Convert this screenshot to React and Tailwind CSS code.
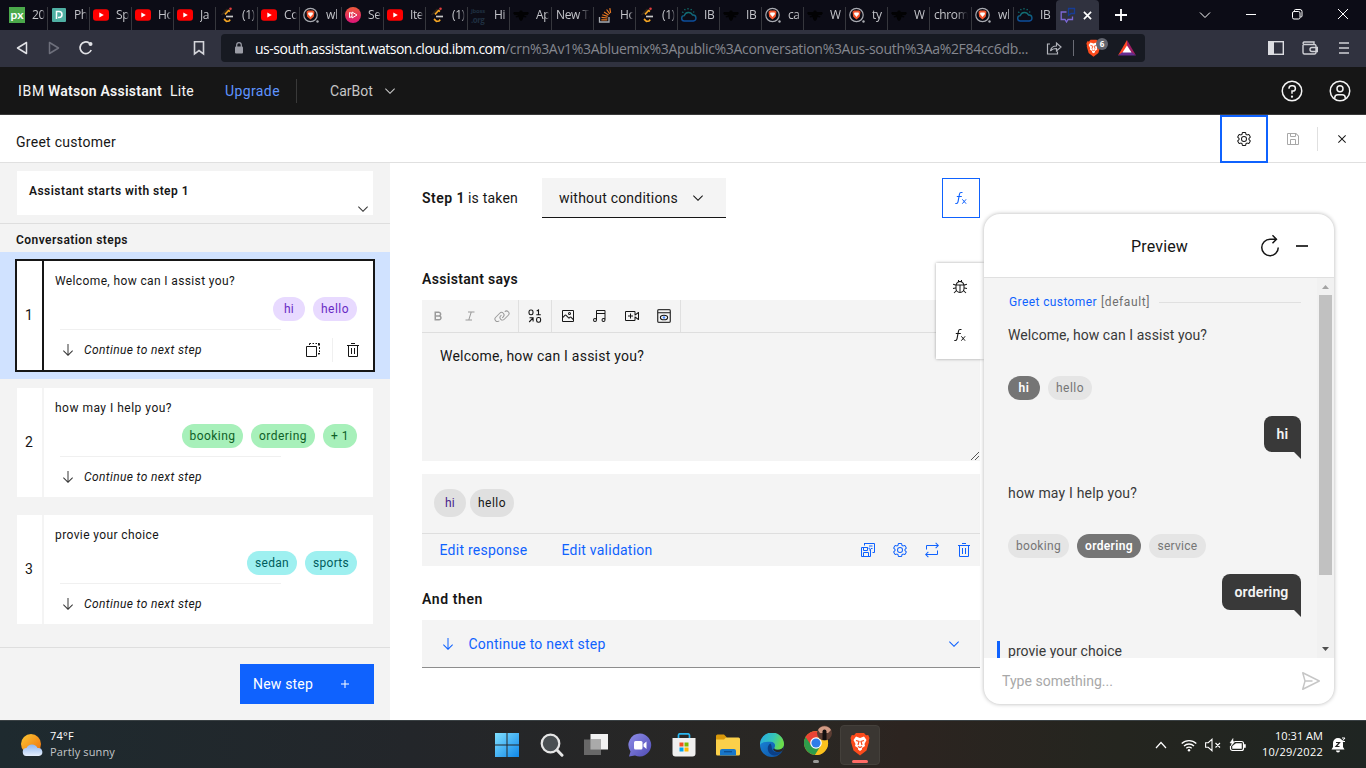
import { useLayoutEffect, useRef } from "react";

/* Text tracked so that it fills the given width in pixels. */
function T({ w, className = "", children }) {
  const ref = useRef(null);
  useLayoutEffect(() => {
    const el = ref.current;
    el.style.letterSpacing = "0px";
    const natural = el.getBoundingClientRect().width;
    const count = el.textContent.length;
    if (w && count) el.style.letterSpacing = `${(w - natural) / count}px`;
  }, [w]);
  return (
    <span ref={ref} className={`inline-block shrink-0 whitespace-nowrap ${className}`}>
      {children}
    </span>
  );
}

const paths = {
  chevron: "M16 22L6 12l1.4-1.4 8.6 8.6 8.6-8.6L26 12z",
  arrow: "M24.59 16.59 17 24.17 17 4 15 4 15 24.17 7.41 16.59 6 18 16 28 26 18z",
  close: "M24 9.4L22.6 8 16 14.6 9.4 8 8 9.4 14.6 16 8 22.6 9.4 24 16 17.4 22.6 24 24 22.6 17.4 16z",
  settings:
    "M27,16.76c0-.25,0-.5,0-.76s0-.51,0-.77l1.92-1.68A2,2,0,0,0,29.3,11L26.94,7a2,2,0,0,0-1.73-1,2,2,0,0,0-.64.1l-2.43.82a11.35,11.35,0,0,0-1.31-.75l-.51-2.52a2,2,0,0,0-2-1.61H13.64a2,2,0,0,0-2,1.61l-.51,2.52a11.48,11.48,0,0,0-1.32.75L7.43,6.06A2,2,0,0,0,6.79,6,2,2,0,0,0,5.06,7L2.7,11a2,2,0,0,0,.41,2.51L5,15.24c0,.25,0,.5,0,.76s0,.51,0,.77L3.11,18.45A2,2,0,0,0,2.7,21L5.06,25a2,2,0,0,0,1.73,1,2,2,0,0,0,.64-.1l2.43-.82a11.35,11.35,0,0,0,1.31.75l.51,2.52a2,2,0,0,0,2,1.61h4.72a2,2,0,0,0,2-1.61l.51-2.52a11.48,11.48,0,0,0,1.32-.75l2.42.82a2,2,0,0,0,.64.1,2,2,0,0,0,1.73-1L29.3,21a2,2,0,0,0-.41-2.51ZM25.21,24l-3.43-1.16a8.86,8.86,0,0,1-2.71,1.57L18.36,28H13.64l-.71-3.55a9.36,9.36,0,0,1-2.7-1.57L6.79,24,4.43,20l2.72-2.4a8.9,8.9,0,0,1,0-3.13L4.43,12,6.79,8l3.43,1.16a8.86,8.86,0,0,1,2.71-1.57L13.64,4h4.72l.71,3.55a9.36,9.36,0,0,1,2.7,1.57L25.21,8,27.57,12l-2.72,2.4a8.9,8.9,0,0,1,0,3.13L27.57,20Z M16,22a6,6,0,1,1,6-6A5.94,5.94,0,0,1,16,22Zm0-10a3.91,3.91,0,0,0-4,4,3.91,3.91,0,0,0,4,4,3.91,3.91,0,0,0,4-4A3.91,3.91,0,0,0,16,12Z",
  trash:
    "M12 12H14V24H12zM18 12H20V24H18zM4 6V8H6V28a2 2 0 0 0 2 2H24a2 2 0 0 0 2-2V8h2V6zM8 28V8H24V28zM12 2H20V4H12z",
  save: "M27.71,9.29l-5-5A1,1,0,0,0,22,4H6A2,2,0,0,0,4,6V26a2,2,0,0,0,2,2H26a2,2,0,0,0,2-2V10A1,1,0,0,0,27.71,9.29ZM12,6h8v4H12Zm8,20H12V18h8Zm2,0V18a2,2,0,0,0-2-2H12a2,2,0,0,0-2,2v8H6V6h4v4a2,2,0,0,0,2,2h8a2,2,0,0,0,2-2V6.41l4,4V26Z",
  help: "M16,2A14,14,0,1,0,30,16,14,14,0,0,0,16,2Zm0,26A12,12,0,1,1,28,16,12,12,0,0,1,16,28Z M16,22a1.5,1.5,0,1,0,1.5,1.5A1.5,1.5,0,0,0,16,22Z M17,8H15.5A4.49,4.49,0,0,0,11,12.49v.51h2v-.5A2.5,2.5,0,0,1,15.5,10H17a2.5,2.5,0,0,1,0,5H15v4.5h2V17a4.5,4.5,0,0,0,0-9Z",
  avatar:
    "M16,8a5,5,0,1,0,5,5A5,5,0,0,0,16,8Zm0,8a3,3,0,1,1,3-3A3,3,0,0,1,16,16Z M16,2A14,14,0,1,0,30,16,14,14,0,0,0,16,2ZM10,26.38V25a3,3,0,0,1,3-3h6a3,3,0,0,1,3,3v1.38a11.9,11.9,0,0,1-12,0Zm13.99-1.45A5,5,0,0,0,19,20H13a5,5,0,0,0-4.99,4.93,12,12,0,1,1,15.98,0Z",
  send: "M27.45,15.11l-22-11a1,1,0,0,0-1.08.12,1,1,0,0,0-.33,1L7,16,4,26.74A1,1,0,0,0,5,28a1,1,0,0,0,.45-.11l22-11a1,1,0,0,0,0-1.78Zm-20.9,10L8.76,17H18V15H8.76L6.55,6.89,24.76,16Z",
  restart:
    "M26,18A10,10,0,1,1,16,8h6.18l-3.58,3.59L20,13l6-6L20,1,18.6,2.41,22.19,6H16A12,12,0,1,0,28,18Z",
  repeat:
    "M6,6H26.17L22.59,2.41,24,1l6,6-6,6-1.41-1.41L26.17,8H6v7H4V8A2,2,0,0,1,6,6Z M9.41,20.41,5.83,24H26V17h2v7a2,2,0,0,1-2,2H5.83l3.58,3.59L8,31,2,25l6-6Z",
  link: "M29.25,6.76a6,6,0,0,0-8.5,0l1.42,1.42a4,4,0,1,1,5.67,5.67l-8,8a4,4,0,1,1-5.67-5.66l1.41-1.42-1.41-1.42-1.42,1.42a6,6,0,0,0,0,8.5A6,6,0,0,0,17,25a6,6,0,0,0,4.27-1.76l8-8A6,6,0,0,0,29.25,6.76Z M4.19,24.82a4,4,0,0,1,0-5.67l8-8a4,4,0,0,1,5.67,0A3.94,3.94,0,0,1,19,14a4,4,0,0,1-1.17,2.85L15.71,19l1.42,1.42,2.12-2.12a6,6,0,0,0-8.51-8.51l-8,8a6,6,0,0,0,0,8.51A6,6,0,0,0,7,28a6.07,6.07,0,0,0,4.28-1.76L9.86,24.82A4,4,0,0,1,4.19,24.82Z",
  image:
    "M19,14a3,3,0,1,0-3-3A3,3,0,0,0,19,14Zm0-4a1,1,0,1,1-1,1A1,1,0,0,1,19,10Z M26,4H6A2,2,0,0,0,4,6V26a2,2,0,0,0,2,2H26a2,2,0,0,0,2-2V6A2,2,0,0,0,26,4Zm0,22H6V20l5-5,5.59,5.59a2,2,0,0,0,2.82,0L21,19l5,5Zm0-4.83-3.59-3.59a2,2,0,0,0-2.82,0L18,19.17l-5.59-5.59a2,2,0,0,0-2.82,0L6,17.17V6H26Z",
  music:
    "M25,4H10A2,2,0,0,0,8,6V20.56A3.96,3.96,0,0,0,6,20a4,4,0,1,0,4,4V12H25v8.56A3.95,3.95,0,0,0,23,20a4,4,0,1,0,4,4V6A2,2,0,0,0,25,4ZM6,26a2,2,0,1,1,2-2A2,2,0,0,1,6,26Zm17,0a2,2,0,1,1,2-2A2,2,0,0,1,23,26ZM10,6H25v4H10Z",
  video:
    "M18 15 14 15 14 11 12 11 12 15 8 15 8 17 12 17 12 21 14 21 14 17 18 17z M21,26H4a2,2,0,0,1-2-2V8A2,2,0,0,1,4,6H21a2,2,0,0,1,2,2v4.06l5.42-3.87A1,1,0,0,1,30,9V23a1,1,0,0,1-1.58.81L23,19.94V24A2,2,0,0,1,21,26ZM4,8V24H21V18a1,1,0,0,1,1.58-.81L28,21.06V10.94l-5.42,3.87A1,1,0,0,1,21,14V8Z",
  bold: "M18.25,25H9V7h8.5a5.25,5.25,0,0,1,4,8.65A5.25,5.25,0,0,1,18.25,25ZM12,22h6.23a2.25,2.25,0,1,0,0-4.5H12Zm0-7.5h5.5a2.25,2.25,0,1,0,0-4.5H12Z",
  italic: "M25 9 25 7 12 7 12 9 17.14 9 12.77 23 7 23 7 25 20 25 20 23 14.86 23 19.23 9z",
  debug:
    "M29.83,20l.34-2L25,17.15V13c0-.08,0-.15,0-.23l5.06-1.36-.51-1.93-4.83,1.29A9,9,0,0,0,20,5V2H18V4.23a8.81,8.81,0,0,0-4,0V2H12V5a9,9,0,0,0-4.71,5.82L2.46,9.48,2,11.41,7,12.77c0,.08,0,.15,0,.23v4.15L1.84,18l.32,2L7,19.18a8.9,8.9,0,0,0,.82,3.57L3.29,27.29l1.42,1.42,4.19-4.2a9,9,0,0,0,14.2,0l4.19,4.2,1.42-1.42-4.54-4.54A8.9,8.9,0,0,0,25,19.18ZM15,25.92A7,7,0,0,1,9,19V13h6ZM9.29,11a7,7,0,0,1,13.42,0ZM23,19a7,7,0,0,1-6,6.92V13h6Z",
  plus: "M17 15V8h-2v7H8v2h7v7h2v-7h7v-2z",
  copy: "M4 8h18a2 2 0 0 1 2 2v18a2 2 0 0 1-2 2H4a2 2 0 0 1-2-2V10a2 2 0 0 1 2-2zm0 2v18h18V10z M8 6V4a2 2 0 0 1 2-2h2v2h-2v2z M15 2h3v2h-3z M21 2h3v2h-3z M26 2h2a2 2 0 0 1 2 2v3h-4V4z M28 10h2v4h-2z M28 17h2v3h-2z M26 22h4v1a2 2 0 0 1-2 2h-2z",
  saveModel:
    "M20 18h-1v-4l-4-4H4a2 2 0 0 0-2 2v16a2 2 0 0 0 2 2h16a2 2 0 0 0 2-2V15l-4-5zM8 12h6v4H8zm8 16H8v-6h8zm4 0h-2v-6a2 2 0 0 0-2-2H8a2 2 0 0 0-2 2v6H4V12h2v4a2 2 0 0 0 2 2h6a2 2 0 0 0 2-2v-4l4 4z M8 2h20a2 2 0 0 1 2 2v16a2 2 0 0 1-2 2h-3v-2h3V4H10v3H8z M18 7h7v2h-7zM22 12h3v2h-3z",
};

function Icon({ name, className = "size-4" }) {
  return (
    <svg viewBox="0 0 32 32" className={`shrink-0 ${className}`} fill="currentColor" fillRule="evenodd">
      <path d={paths[name]} />
    </svg>
  );
}

function Fx({ className = "" }) {
  return (
    <svg viewBox="0 0 16 16" className={`size-4 shrink-0 ${className}`} fill="none" stroke="currentColor">
      <path d="M2.300 13.500h1.200c1 0 1.300-.6 1.500-1.600L6.500 4c.2-1 .6-1.500 1.500-1.500h1.500M3.800 6.500h5" strokeWidth="1.100" />
      <path d="M9.300 9.300l3.800 4.400M13.100 9.300l-3.800 4.400" strokeWidth="1" />
    </svg>
  );
}

/* ---------- browser chrome ---------- */

function LionShield({ className }) {
  return (
    <svg viewBox="0 0 20 24" className={className}>
      <path d="M6 1h8l2 2.300 2.200-.3L19.500 6l-.8 3 .3 1-2.500 8.500L10 23.500 3.500 18.500 1 10l.3-1L.5 6l1.300-3L4 3.300z" fill="#fb4b1c" />
      <path d="M10 6l4-1.500 2.500 3.500-2 4 .5 2-3 2 0 1.500L10 19l-2-1.500V16l-3-2 .5-2-2-4L6 4.500z" fill="#fff" />
      <path d="M6 8.500l3 1-1 3.500M14 8.500l-3 1 1 3.500M8 14.500l2 1 2-1" stroke="#fb4b1c" strokeWidth="1.200" fill="none" />
    </svg>
  );
}

function Favicon({ kind }) {
  switch (kind) {
    case "px":
      return (
        <span className="flex size-4 shrink-0 items-center justify-center bg-[#4ba94b] font-['Lato'] text-[12px] font-bold leading-none text-white">
          px
        </span>
      );
    case "docs":
      return (
        <svg viewBox="0 0 16 16" className="size-4 shrink-0">
          <rect x="1" y="1" width="14" height="14" rx="1" fill="#4fb0a3" />
          <path d="M5.500 12V4.500h2.500a3 3 0 0 1 0 6H7" fill="none" stroke="#fff" strokeWidth="1.500" />
        </svg>
      );
    case "yt":
      return (
        <svg viewBox="0 0 16 16" className="size-4 shrink-0">
          <rect y="2.300" width="16" height="11.400" rx="3" fill="#f00" />
          <path d="M6.300 5.500v5L10.800 8z" fill="#fff" />
        </svg>
      );
    case "leet":
      return (
        <svg viewBox="0 0 16 16" className="size-4 shrink-0" fill="none" strokeWidth="1.700">
          <path d="M8.500 2L2.500 8" stroke="#2a2520" />
          <path d="M11 4.500L9.500 3.500 6 7.300M5 12l2.500 2.300 2.500-.3 1.200-1.300" stroke="#f5a623" />
          <path d="M7 9.500h7" stroke="#c8c8c8" />
          <circle cx="11.500" cy="1.800" r="1.300" fill="#e23d3d" stroke="none" />
        </svg>
      );
    case "brave":
      return (
        <svg viewBox="0 0 16 16" className="size-4 shrink-0">
          <circle cx="7.500" cy="8" r="6.700" fill="none" stroke="#a9abb1" strokeWidth="1.200" />
          <path d="M5 3.500h5l1.500 1.300-.8 5L7.500 12.500 4.200 9.800l-.7-5z" fill="#f4552d" />
          <path d="M5.500 5.500h4l.5 1.500-2.500 3L5 7z" fill="#fff" />
          <circle cx="14.500" cy="14.500" r="1.200" fill="#a9abb1" />
        </svg>
      );
    case "play":
      return (
        <svg viewBox="0 0 16 16" className="size-4 shrink-0">
          <defs>
            <linearGradient id="pk" x1="0" y1="0" x2="0" y2="1">
              <stop offset="0" stopColor="#ee5a3b" />
              <stop offset="1" stopColor="#dd1478" />
            </linearGradient>
          </defs>
          <circle cx="8" cy="8" r="8" fill="url(#pk)" />
          <path d="M7 5v6l5-3zM4.500 5.500v5l2.500-1M4.500 5.500L7 6.500" fill="none" stroke="#fff" />
        </svg>
      );
    case "jboss":
      return (
        <span className="flex w-4 shrink-0 flex-col font-['Open_Sans'] font-bold text-[#1f2f40]">
          <span className="text-[6px] leading-[8px] tracking-[-0.3px]">jboss</span>
          <span className="text-[8px] leading-[9px] tracking-[-0.5px]">.org</span>
        </span>
      );
    case "bee":
      return (
        <svg viewBox="0 0 16 16" className="size-4 shrink-0" fill="#020203">
          <path d="M7 3.500h2l.8 1.500h5l1.200 1-1.500 2-4 .3 3 1.200-.5 1-2.500-.5L9.500 13 8 14l-1.500-1L5.500 10l-2.500.5-.5-1 3-1.200-4-.3L0 6l1.200-1h5z" />
        </svg>
      );
    case "stack":
      return (
        <svg viewBox="0 0 16 16" className="size-4 shrink-0" fill="none">
          <path d="M2.500 10v5h9.500v-5" stroke="#a9adb3" strokeWidth="1.300" />
          <path d="M4.300 12.800h6M4.500 10.300l6 .7M5.200 7.700l5.500 1.700M7 5l4.600 3M9.600 2.500l3.200 4.300M12.800 1.200l.8 4.600" stroke="#e87922" strokeWidth="1.200" />
        </svg>
      );
    case "cloud":
      return (
        <svg viewBox="0 0 16 16" className="size-4 shrink-0" fill="none">
          <defs>
            <linearGradient id="cl" x1="0" y1="0" x2="0" y2="1">
              <stop offset="0" stopColor="#12706f" />
              <stop offset="1" stopColor="#0c4c9c" />
            </linearGradient>
          </defs>
          <path d="M3.500 14a2.700 2.700 0 0 1-.2-5.400A4.400 4.400 0 0 1 11.500 8a3 3 0 0 1 .8 6z" stroke="url(#cl)" strokeWidth="1.400" />
          <path d="M2.500 5.500L1 5M4.300 3.300L3.500 2M7 2.500V1M9.800 3.300L10.500 2M12 5.300l1.300-.6" stroke="#12706f" strokeWidth="1.200" />
        </svg>
      );
    default:
      return null;
  }
}

const tabs = [
  ["px", "20"],
  ["docs", "Ph"],
  ["yt", "Sp"],
  ["yt", "Ho"],
  ["yt", "Ja"],
  ["leet", "(1)"],
  ["yt", "Co"],
  ["brave", "wl"],
  ["play", "Se"],
  ["yt", "Ite"],
  ["leet", "(1)"],
  ["jboss", "Hi"],
  ["bee", "Ap"],
  ["", "New Ta"],
  ["stack", "Ho"],
  ["leet", "(1)"],
  ["cloud", "IB"],
  ["bee", "IB"],
  ["brave", "ca"],
  ["bee", "W"],
  ["brave", "ty"],
  ["bee", "W"],
  ["", "chrom"],
  ["brave", "wl"],
  ["cloud", "IB"],
];

function TabStrip() {
  return (
    <div className="flex h-[30px] bg-[#0c0c16] pl-[6px] font-['Open_Sans',sans-serif] text-[12px] text-[#c3c4c9]">
      {tabs.map(([icon, label], i) => (
        <div key={i} className="flex w-[42px] shrink-0 items-center">
          <div className={`flex h-[30px] w-[40px] items-center ${icon ? "pl-[3px]" : "pl-[4px]"}`}>
            <Favicon kind={icon} />
            <span
              className={`overflow-hidden whitespace-nowrap tracking-[-0.4px] ${icon ? "ml-[7px] w-[13px] [mask-image:linear-gradient(to_right,#000_75%,transparent)]" : "w-[34px] [mask-image:linear-gradient(to_right,#000_65%,transparent)]"}`}
            >
              {label}
            </span>
          </div>
          <div className={`ml-auto mt-[7px] h-[23px] w-px ${i < 24 ? "bg-[#36373d]" : ""}`} />
        </div>
      ))}
      <div className="flex w-[43px] items-center gap-[7px] rounded-t-[4px] bg-[#30323f] pl-[4px]">
        <svg viewBox="0 0 16 16" className="size-4 shrink-0" fill="none" strokeWidth="1.300">
          <path d="M6.500 5H1.200v7.500H5l1.500 2.500L8 12.500h4.500V9.500" stroke="#7d68d8" />
          <path d="M8.500 1.500h6v5h-3.500l-2.500 2z" stroke="#173c95" />
        </svg>
        <svg viewBox="0 0 10 10" className="size-[9px]" stroke="#fff" strokeWidth="1.800">
          <path d="M1 1l8 8M9 1L1 9" />
        </svg>
      </div>
      <svg viewBox="0 0 12 12" className="ml-[16px] size-3 self-center" stroke="#fff" strokeWidth="1.800">
        <path d="M6 0v12M0 6h12" />
      </svg>
      <svg viewBox="0 0 12 12" className="ml-[72px] size-3 self-center" stroke="#fff" fill="none">
        <path d="M1 3.500l5 5 5-5" />
      </svg>
      <svg viewBox="0 0 12 12" className="ml-[34px] size-3 self-center" stroke="#fff">
        <path d="M1 5.500h10" />
      </svg>
      <svg viewBox="0 0 12 12" className="ml-[34px] size-3 self-center" stroke="#fff" fill="none">
        <rect x="1.500" y="2.500" width="7.500" height="7.500" rx="1.500" />
        <path d="M3.500 2.300V1.500a1 1 0 0 1 1-1H9a2 2 0 0 1 2 2v4.500a1 1 0 0 1-1 1h-.7" />
      </svg>
      <svg viewBox="0 0 12 12" className="ml-[34px] size-3 -translate-y-px self-center" stroke="#fff">
        <path d="M1 1l10 10M11 1L1 11" />
      </svg>
    </div>
  );
}

function AddressBar() {
  return (
    <div className="flex h-[37px] items-center bg-[#30323f] pb-px">
      <svg viewBox="0 0 12 14" className="ml-[16px] h-[14px] w-[12px]" fill="none" stroke="#e0e1e5" strokeWidth="1.500">
        <path d="M10.500 1.500v11L1.500 7z" strokeLinejoin="round" />
      </svg>
      <svg viewBox="0 0 12 14" className="ml-[20px] h-[14px] w-[12px]" fill="none" stroke="#6d6f7b" strokeWidth="1.500">
        <path d="M1.500 1.500v11L10.500 7z" strokeLinejoin="round" />
      </svg>
      <svg viewBox="0 0 16 16" className="ml-[18px] size-4" fill="none" stroke="#e0e1e5" strokeWidth="1.700">
        <path d="M13.200 10a5.800 5.800 0 1 1-2-7" />
        <circle cx="12.500" cy="4" r="2" fill="#e0e1e5" stroke="none" />
      </svg>
      <svg viewBox="0 0 12 16" className="ml-[99px] h-4 w-3" fill="none" stroke="#d4d5da" strokeWidth="1.600">
        <path d="M1.500 1.800h9v12L6 10.500l-4.500 3.300z" />
      </svg>
      <div className="ml-[16px] flex h-[28px] w-[924px] items-center rounded-[4px] bg-[#171a22] font-['Open_Sans',sans-serif] text-[14px]">
        <svg viewBox="0 0 10 12" className="ml-[13px] h-3 w-[10px]" fill="#9b9da6">
          <rect x="1" y="4.500" width="8" height="7" rx="1" />
          <path d="M2.700 5V3a2.300 2.300 0 0 1 4.600 0v2" fill="none" stroke="#9b9da6" strokeWidth="1.200" />
        </svg>
        <T w={250} className="ml-[11px] text-white">us-south.assistant.watson.cloud.ibm.com</T>
        <T w={523} className="text-[#85878f]">/crn%3Av1%3Abluemix%3Apublic%3Aconversation%3Aus-south%3Aa%2F84cc6db...</T>
        <svg viewBox="0 0 16 14" className="ml-[18px] h-[14px] w-4" fill="none" stroke="#b3b5bc" strokeWidth="1.200">
          <path d="M4 3H1.500v10h10v-2.500M4.500 10c.5-3.500 2.500-5 6-5V2l4.500 4-4.500 4V7.500c-2.500 0-4.500.5-6 2.500z" />
        </svg>
        <div className="ml-[11px] h-[16px] w-px bg-[#6a6c75]" />
        <div className="relative ml-[12px] h-[18px] w-[15px]">
          <LionShield className="h-[18px] w-[15px]" />
          <span className="absolute -right-[7px] -top-px flex h-[12px] w-[12px] items-center justify-center rounded-full bg-[#62656f] text-[8px] font-bold leading-none text-white">
            6
          </span>
        </div>
        <svg viewBox="0 0 18 16" className="ml-[17px] h-4 w-[18px]">
          <path d="M9 0L0 15.500 9 10z" fill="#ff4724" />
          <path d="M9 0l9 15.500L9 10z" fill="#9e1f63" />
          <path d="M0 15.500h18L9 9z" fill="#662d91" />
          <path d="M9 5.500l4.500 7h-9z" fill="#fff" />
        </svg>
      </div>
      <svg viewBox="0 0 16 14" className="ml-[123px] h-[14px] w-4">
        <rect x=".7" y=".7" width="14.600" height="12.600" fill="none" stroke="#dcdde1" strokeWidth="1.400" />
        <rect x="1" y="1" width="5" height="12" fill="#dcdde1" />
      </svg>
      <svg viewBox="0 0 16 14" className="ml-[18px] h-[14px] w-4" fill="none" stroke="#d0d1d6" strokeWidth="1.400">
        <path d="M1 4v7.500A1.500 1.500 0 0 0 2.500 13h10a1.500 1.500 0 0 0 1.500-1.500V5a1.500 1.500 0 0 0-1.500-1.500H2A1.300 1.300 0 0 1 2 1h10v2.500M15.300 6.500H10a2 2 0 0 0 0 4h5.300z" />
      </svg>
      <svg viewBox="0 0 10 12" className="ml-[21px] h-3 w-[10px]" stroke="#d0d1d6" strokeWidth="1.500">
        <path d="M0 1h10M0 6h10M0 11h10" />
      </svg>
    </div>
  );
}

/* ---------- application ---------- */

function AppHeader() {
  return (
    <div className="flex h-[48px] items-center border-b border-[#393939] bg-[#161616] text-[14px] text-[#f4f4f4]">
      <div className="flex pt-[2px]">
        <T w={27} className="ml-[18px]">IBM</T>
        <T w={114} className="ml-[3px] font-semibold">Watson Assistant</T>
        <T w={24} className="ml-[8px]">Lite</T>
        <T w={55} className="ml-[31px] text-[#5f94ff]">Upgrade</T>
      </div>
      <div className="ml-[16px] h-[24px] w-px bg-[#393939]" />
      <T w={43} className="ml-[33px] pt-[2px] text-[#c6c6c6]">CarBot</T>
      <Icon name="chevron" className="ml-[9px] size-4 text-[#c6c6c6]" />
      <Icon name="help" className="ml-auto size-6" />
      <Icon name="avatar" className="ml-[24px] mr-[14px] size-6" />
    </div>
  );
}

function TitleBar() {
  return (
    <div className="flex h-[48px] items-center border-b border-[#e0e0e0] bg-white text-[14px]">
      <T w={100} className="ml-[16px] mt-[8px]">Greet customer</T>
      <div className="-mb-px ml-auto flex size-[48px] items-center justify-center border-2 border-[#0f62fe]">
        <Icon name="settings" />
      </div>
      <Icon name="save" className="ml-[17px] size-4 text-[#a8a8a8]" />
      <div className="ml-[16px] h-[24px] w-px bg-[#e0e0e0]" />
      <Icon name="close" className="ml-[16px] mr-[16px] size-4" />
    </div>
  );
}

const tones = {
  purple: "bg-[#e8daff] text-[#6929c4]",
  green: "bg-[#a7f0ba] text-[#0e6027]",
  cyan: "bg-[#9ef0f0] text-[#005d5d]",
};

function StepCard({ n, title, titleWidth, tone, tags, active }) {
  return (
    <div className={active ? "bg-[#d0e2ff] px-[15px] py-[7px]" : "px-[17px]"}>
      <div className={`flex bg-white ${active ? "h-[113px] border-2 border-[#161616]" : "h-[109px]"}`}>
        <div
          className={`flex w-[27px] items-center justify-center border-r-2 pr-px text-[14px] ${active ? "border-[#161616]" : "border-[#f4f4f4]"}`}
        >
          {n}
        </div>
        <div className="flex flex-1 flex-col text-[12px]">
          <div className="ml-[11px] flex h-[36px] items-center pt-[4px]">
            <T w={titleWidth}>{title}</T>
          </div>
          <div className="flex h-[24px] justify-end gap-2 pr-[16px]">
            {tags.map(([label, w, tw]) => (
              <div key={label} style={{ width: w }} className={`flex items-center justify-center rounded-full ${tones[tone]}`}>
                <T w={tw}>{label}</T>
              </div>
            ))}
          </div>
          <div className="ml-[16px] mt-[8px] h-px w-[221px] bg-[#f0f0f0]" />
          <div className="ml-[16px] mt-[8px] flex h-[24px] items-center">
            <Icon name="arrow" className="size-4 text-[#393939]" />
            <T w={118} className="ml-[8px] italic">Continue to next step</T>
            {active && (
              <>
                <Icon name="copy" className="ml-[103px] size-4" />
                <div className="ml-[11px] h-[24px] w-px bg-[#f0f0f0]" />
                <Icon name="trash" className="ml-[12px] size-4" />
              </>
            )}
          </div>
        </div>
      </div>
    </div>
  );
}

function Sidebar() {
  return (
    <div className="flex h-[557px] w-[390px] shrink-0 flex-col bg-[#f3f3f3]">
      <div className="mx-[17px] mt-[8px] flex h-[44px] items-start bg-white text-[12px]">
        <T w={160} className="ml-[12px] mt-[12px] leading-[16px] font-semibold">Assistant starts with step 1</T>
        <Icon name="chevron" className="ml-auto mr-[2px] mt-[30px] size-4 text-[#393939]" />
      </div>
      <div className="mt-[8px] h-px bg-[#dedede]" />
      <div className="flex h-[28px] items-center pl-[16px] pt-[4px] text-[12px] font-semibold">
        <T w={112}>Conversation steps</T>
      </div>
      <div className="flex flex-col">
        <StepCard
          n={1}
          title="Welcome, how can I assist you?"
          titleWidth={180}
          tone="purple"
          tags={[["hi", 32, 10], ["hello", 44, 28]]}
          active
        />
        <div className="h-[9px]" />
        <StepCard
          n={2}
          title="how may I help you?"
          titleWidth={117}
          tone="green"
          tags={[["booking", 61, 46], ["ordering", 64, 48], ["+ 1", 34, 18]]}
        />
        <div className="h-[18px]" />
        <StepCard
          n={3}
          title="provie your choice"
          titleWidth={104}
          tone="cyan"
          tags={[["sedan", 50, 34], ["sports", 52, 36]]}
        />
      </div>
      <div className="mt-[23px] h-px bg-[#dedede]" />
      <div className="ml-[240px] mt-[16px] flex h-[40px] w-[134px] items-center bg-[#0f62fe] text-[14px] text-white">
        <T w={60} className="ml-[13px]">New step</T>
        <Icon name="plus" className="ml-[24px] size-4" />
      </div>
    </div>
  );
}

function Editor() {
  return (
    <div className="flex w-[558px] shrink-0 flex-col text-[14px]">
      <div className="mt-[15px] flex h-[40px] items-center">
        <T w={43} className="font-semibold">Step 1</T>
        <T w={50} className="ml-[3px]">is taken</T>
        <div className="ml-[24px] flex h-[40px] w-[184px] items-center border-b border-[#161616] bg-[#f4f4f4] pl-[17px]">
          <T w={119} className="pt-[2px]">without conditions</T>
          <Icon name="chevron" className="ml-[12px] size-4" />
        </div>
        <div className="ml-auto flex h-[40px] w-[38px] items-center justify-center border border-[#0f62fe] text-[#0f62fe]">
          <Fx />
        </div>
      </div>
      <div className="mt-[51px] flex h-[20px] items-center font-semibold">
        <T w={96}>Assistant says</T>
      </div>
      <div className="mt-[11px] flex h-[33px] items-center border-b border-[#dedede] bg-[#f4f4f4]">
        <div className="flex h-full w-[97px] items-center gap-4 border-r border-[#e0e0e0] pl-[8px] text-[#9a9a9a]">
          <Icon name="bold" />
          <Icon name="italic" />
          <Icon name="link" />
        </div>
        <div className="flex h-full w-[33px] items-center justify-center border-r border-[#e0e0e0]">
          <svg viewBox="0 0 16 16" className="size-4" fill="none" stroke="#161616" strokeWidth="1.100">
            <rect x="2" y="2" width="4" height="4.800" rx="1.700" />
            <path d="M9.700 3l1.800-1v4.800M9.300 6.800h4.500" />
            <path d="M2.200 14l3.600-3.800M2.500 9.800h3.600v3.800" />
            <rect x="9.600" y="9.500" width="4" height="4.800" rx="1.700" />
          </svg>
        </div>
        <div className="flex h-full w-[129px] items-center gap-4 border-r border-[#e0e0e0] pl-[8px]">
          <Icon name="image" />
          <Icon name="music" />
          <Icon name="video" />
          <svg viewBox="0 0 16 16" className="size-4" fill="none" stroke="#393939">
            <rect x="1.700" y="1.700" width="12.600" height="12.600" rx="1" strokeWidth="1.300" />
            <path d="M1.500 4.700h13" strokeWidth="1.200" />
            <ellipse cx="8" cy="9.500" rx="3.600" ry="2.300" stroke="#161616" strokeWidth="1.100" />
            <circle cx="8" cy="9.500" r="1.200" fill="#4589ff" stroke="none" />
          </svg>
        </div>
      </div>
      <div className="flex h-[128px] bg-[#f4f4f4]">
        <T w={204} className="ml-[18px] mt-[13px] leading-[20px]">Welcome, how can I assist you?</T>
        <svg viewBox="0 0 10 10" className="ml-auto size-[10px] self-end" stroke="#555" fill="none">
          <path d="M1 9l8-8M5 9l4-4" />
        </svg>
      </div>
      <div className="mt-[13px] flex h-[60px] items-center gap-[4px] border-b border-[#dedede] bg-[#f4f4f4] pb-px pl-[12px] text-[12px]">
        <div className="flex h-[28px] w-[32px] items-center justify-center rounded-full bg-[#e0e0e0] text-[#491d8b]">
          <T w={10}>hi</T>
        </div>
        <div className="flex h-[28px] w-[44px] items-center justify-center rounded-full bg-[#e0e0e0]">
          <T w={28}>hello</T>
        </div>
      </div>
      <div className="flex h-[32px] items-center bg-[#f4f4f4] text-[#0f62fe]">
        <T w={88} className="ml-[17.500px]">Edit response</T>
        <T w={91} className="ml-[34px]">Edit validation</T>
        <div className="ml-auto mr-[8px] flex gap-4">
          <Icon name="saveModel" />
          <Icon name="settings" />
          <Icon name="repeat" />
          <Icon name="trash" />
        </div>
      </div>
      <div className="mt-[23px] flex h-[20px] items-center font-semibold">
        <T w={61}>And then</T>
      </div>
      <div className="mt-[11px] flex h-[48px] items-center border-b border-[#8d8d8d] bg-[#f4f4f4] text-[#0f62fe]">
        <Icon name="arrow" className="ml-[18px] size-4" />
        <T w={137} className="ml-[12.500px] pt-[2px]">Continue to next step</T>
        <Icon name="chevron" className="ml-auto mr-[18px] size-4" />
      </div>
    </div>
  );
}

function Chip({ w, tw, on, children }) {
  return (
    <div
      style={{ width: w }}
      className={`flex h-[24px] items-center justify-center rounded-full text-[12px] ${on ? "bg-[#757575] font-semibold text-white" : "bg-[#e5e5e5] text-[#757575]"}`}
    >
      <T w={tw}>{children}</T>
    </div>
  );
}

function Bubble({ tw, children }) {
  return (
    <div className="flex flex-col items-end">
      <div className="flex h-[36px] items-center rounded-[8px] rounded-br-none bg-[#393939] px-[12.500px] font-semibold text-[#f4f4f4]">
        <T w={tw}>{children}</T>
      </div>
      <svg viewBox="0 0 7 7" className="size-[7px]" fill="#393939">
        <path d="M0 0h7v7z" />
      </svg>
    </div>
  );
}

function Preview() {
  return (
    <div className="flex h-[490px] w-[350px] flex-col overflow-hidden rounded-[16px] bg-white text-[14px] shadow-[0_0_4px_rgba(0,0,0,0.3)]">
      <div className="flex h-[64px] shrink-0 items-center border-b border-[#e0e0e0]">
        <T w={57} className="ml-[147px] pt-[2px] text-[16px]">Preview</T>
        <Icon name="restart" className="ml-[70px] size-6" />
        <div className="ml-[14px] h-[2px] w-[12px] bg-[#393939]" />
      </div>
      <div className="flex h-[380px] shrink-0 overflow-hidden bg-[#f4f4f4]">
        <div className="flex h-[380px] w-[333px] flex-col overflow-hidden">
          <div className="ml-[25px] mt-[16px] flex h-[16px] shrink-0 items-center text-[12px]">
            <T w={88} className="text-[#0f62fe]">Greet customer</T>
            <T w={49} className="ml-[4px] text-[#6f6f6f]">[default]</T>
            <div className="ml-[9px] h-px w-[142px] bg-[#e0e0e0]" />
          </div>
          <div className="ml-[24px] mt-[15px] h-[20px] shrink-0 text-[#393939]">
            <T w={199} className="leading-[20px]">Welcome, how can I assist you?</T>
          </div>
          <div className="ml-[24px] mt-[31px] flex shrink-0 gap-2">
            <Chip w={32} tw={11} on>hi</Chip>
            <Chip w={44} tw={28}>hello</Chip>
          </div>
          <div className="mr-[16px] mt-[16px] flex shrink-0 justify-end">
            <Bubble tw={12}>hi</Bubble>
          </div>
          <div className="ml-[24px] mt-[24px] h-[20px] shrink-0 text-[#393939]">
            <T w={129} className="leading-[20px]">how may I help you?</T>
          </div>
          <div className="ml-[24px] mt-[31px] flex shrink-0 gap-2">
            <Chip w={61} tw={45}>booking</Chip>
            <Chip w={64} tw={48} on>ordering</Chip>
            <Chip w={57} tw={40}>service</Chip>
          </div>
          <div className="mr-[16px] mt-[16px] flex shrink-0 justify-end">
            <Bubble tw={54}>ordering</Bubble>
          </div>
          <div className="ml-[13px] mt-[24px] flex shrink-0 items-start border-l-[3px] border-[#0f62fe] pb-4 text-[#393939]">
            <T w={114} className="ml-[8px] leading-[20px]">provie your choice</T>
          </div>
        </div>
        <div className="flex w-[17px] flex-col items-center bg-[#f1f1f1]">
          <svg viewBox="0 0 17 17" className="size-[17px] shrink-0" fill="#a3a3a3">
            <path d="M5 11l3.500-4 3.500 4z" />
          </svg>
          <div className="h-[280px] w-[13px] shrink-0 bg-[#c1c1c1]" />
          <svg viewBox="0 0 17 17" className="mt-auto size-[17px] shrink-0" fill="#505050">
            <path d="M5 6l3.500 4L12 6z" />
          </svg>
        </div>
      </div>
      <div className="flex h-[46px] shrink-0 items-center">
        <T w={111} className="ml-[18px] text-[#a8a8a8]">Type something...</T>
        <Icon name="send" className="ml-auto mr-[11px] size-6 text-[#c6c6c6]" />
      </div>
    </div>
  );
}

/* ---------- taskbar ---------- */

function Taskbar() {
  return (
    <div className="flex h-[48px] items-center border-t border-[#3a4144] bg-[linear-gradient(to_right,#1e2a2f,#23262a_30%,#2a2723_60%,#2c2420_66%,#24251f_82%,#1f2522)] font-['Open_Sans',sans-serif] text-[11px] text-white">
      <svg viewBox="0 0 22 22" className="ml-[21px] size-[22px]">
        <defs>
          <linearGradient id="sun" x1="0" y1="0" x2="1" y2="1">
            <stop offset="0" stopColor="#fcc934" />
            <stop offset="1" stopColor="#ef6c0a" />
          </linearGradient>
          <linearGradient id="cloudy" x1="0" y1="0" x2="0" y2="1">
            <stop offset="0" stopColor="#8fb6f0" />
            <stop offset="1" stopColor="#e6effc" />
          </linearGradient>
        </defs>
        <circle cx="10" cy="10" r="10" fill="url(#sun)" />
        <path d="M6 22a4 4 0 0 1-.5-8 6 6 0 0 1 11 0A4 4 0 0 1 18 22z" fill="url(#cloudy)" />
      </svg>
      <div className="ml-[7px] flex w-[65px] flex-col items-start pb-[2px]">
        <T w={24} className="leading-[16px]">74°F</T>
        <T w={65} className="leading-[16px] text-[#c3c6c8]">Partly sunny</T>
      </div>
      <svg viewBox="0 0 24 24" className="ml-[380px] size-[24px]">
        <defs>
          <linearGradient id="win" x1="0" y1="0" x2="1" y2="1">
            <stop offset="0" stopColor="#80e0ff" />
            <stop offset="1" stopColor="#0f86e8" />
          </linearGradient>
        </defs>
        <path d="M0 0h11.500v11.500H0zM12.500 0H24v11.500H12.500zM0 12.500h11.500V24H0zM12.500 12.500H24V24H12.500z" fill="url(#win)" />
      </svg>
      <svg viewBox="0 0 24 24" className="ml-[21px] size-[24px]">
        <circle cx="10.500" cy="10.500" r="8.800" fill="#4a4f52" stroke="#e6e6e6" strokeWidth="2.200" />
        <path d="M17 17l5 5.200" stroke="#e6e6e6" strokeWidth="3" strokeLinecap="round" />
      </svg>
      <svg viewBox="0 0 24 24" className="ml-[20px] size-[24px]">
        <rect x="6.500" y="1" width="17.500" height="15.500" fill="#f1f1f1" />
        <rect x="0" y="6.500" width="17" height="15.500" fill="#6e6e6e" opacity=".92" />
        <rect x="6.500" y="6.500" width="10.500" height="10" fill="#aaa" />
      </svg>
      <svg viewBox="0 0 24 24" className="ml-[20px] size-[24px]">
        <defs>
          <linearGradient id="teams" x1="0" y1="0" x2="1" y2="1">
            <stop offset="0" stopColor="#8f8ee8" />
            <stop offset="1" stopColor="#4f4bb5" />
          </linearGradient>
        </defs>
        <path d="M12 .5a11.500 11.500 0 1 1-5 22L1 23.500l1.500-5A11.500 11.500 0 0 1 12 .5z" fill="url(#teams)" />
        <rect x="6" y="8" width="8.500" height="8.500" rx="1.500" fill="#fff" />
        <path d="M15.500 11l3-2.500v7.500l-3-2.500z" fill="#fff" />
      </svg>
      <svg viewBox="0 0 24 24" className="ml-[20px] size-[24px]">
        <path d="M6.500 6V2.300A1.500 1.500 0 0 1 8 .8h8a1.500 1.500 0 0 1 1.500 1.500V6" fill="none" stroke="#29b6f0" strokeWidth="1.700" />
        <path d="M.5 5h23v15.500a3 3 0 0 1-3 3h-17a3 3 0 0 1-3-3z" fill="#efefef" />
        <path d="M7.500 9.500h4v4h-4z" fill="#f25022" />
        <path d="M12.500 9.500h4v4h-4z" fill="#7fba00" />
        <path d="M7.500 14.500h4v4h-4z" fill="#00a4ef" />
        <path d="M12.500 14.500h4v4h-4z" fill="#ffb900" />
      </svg>
      <svg viewBox="0 0 24 24" className="ml-[20px] size-[24px]">
        <path d="M0 3a1.500 1.500 0 0 1 1.500-1.500H8L10.500 4v6H0z" fill="#d9980a" />
        <path d="M0 6.500h8l2-2H22.500A1.500 1.500 0 0 1 24 6v15a1.500 1.500 0 0 1-1.500 1.500h-21A1.500 1.500 0 0 1 0 21z" fill="#fbd04a" />
        <path d="M4 22.500v-4.500a2 2 0 0 1 2-2h12a2 2 0 0 1 2 2v4.500z" fill="#1877c9" />
        <path d="M8 18.700h8" stroke="#0c4f92" strokeWidth="1.300" />
      </svg>
      <svg viewBox="0 0 24 24" className="ml-[20px] size-[24px]">
        <defs>
          <linearGradient id="edgeA" x1="0" y1="0" x2="1" y2=".3">
            <stop offset="0" stopColor="#26a8e6" />
            <stop offset=".6" stopColor="#35c5b7" />
            <stop offset="1" stopColor="#6bdc4a" />
          </linearGradient>
          <linearGradient id="edgeB" x1="0" y1="0" x2="1" y2="1">
            <stop offset="0" stopColor="#1b8be0" />
            <stop offset="1" stopColor="#0c4d9e" />
          </linearGradient>
        </defs>
        <circle cx="12" cy="12" r="12" fill="url(#edgeB)" />
        <path d="M0 12A12 12 0 0 1 24 11c0 4-2.500 5.800-6 5.800-3 0-4.500-1-3.500-2.300 1.500-2.500 0-5.800-4-5.800C5 8.700 1.500 9 0 12z" fill="url(#edgeA)" />
        <path d="M10.500 10.500c-3.500 1.500-4 8 .5 11 3.500 2 8 .7 10.500-3-3.500 1.500-8 1-9.300-2-.8-2-.2-4-1.700-6z" fill="#0b3f86" />
        <path d="M24 12.500c-1 3-3.500 4.300-6 4.300-3 0-4.500-1-3.500-2.300l-1.300 2.200c1.800 2.600 6 3 9.300 1.300z" fill="#2a2723" />
      </svg>
      <div className="ml-[20px] flex h-[48px] w-[28px] flex-col pt-[4px]">
        <svg viewBox="0 0 28 30" className="h-[30px] w-[28px]">
          <circle cx="12" cy="18" r="12" fill="#e8a61a" />
          <path d="M12 18L1.600 12A12 12 0 0 0 11 30l5-8z" fill="#2e9c4b" />
          <path d="M12 12.500h10.700A12 12 0 0 1 11 30l5.800-9z" fill="#fbc21d" />
          <path d="M1.600 12A12 12 0 0 1 22.400 12.500H12L7 20z" fill="#ea4335" />
          <circle cx="12" cy="18" r="5.800" fill="#fff" />
          <circle cx="12" cy="18" r="4.600" fill="#2f7de9" />
          <circle cx="20.500" cy="8" r="7.500" fill="#5b3d33" />
          <path d="M14 5a7.500 7.500 0 0 1 13 0l-3 3h-8z" fill="#d29b85" />
          <path d="M18.500 15V6.500a2 2 0 0 1 4 0V15z" fill="#130f10" />
        </svg>
        <div className="ml-[9px] mt-[5px] h-[3px] w-[6px] rounded-full bg-[#9a9a98]" />
      </div>
      <div className="ml-[8px] flex h-[40px] w-[40px] flex-col items-center rounded-[4px] border border-[#44403b] bg-[#3a3632]">
        <LionShield className="mt-[6px] h-[24px] w-[20px]" />
        <div className="mt-[4px] h-[3px] w-[16px] rounded-full bg-[#ff6b66]" />
      </div>
      <svg viewBox="0 0 12 8" className="ml-auto h-2 w-3" fill="none" stroke="#fff" strokeWidth="1.200">
        <path d="M1 7l5-5.500L11 7" />
      </svg>
      <svg viewBox="0 0 16 14" className="ml-[14px] h-[14px] w-4" fill="none" stroke="#fff" strokeWidth="1.300">
        <path d="M.7 5.500a10.500 10.500 0 0 1 14.600 0M3 8a7.300 7.300 0 0 1 10 0M5.300 10.300a4 4 0 0 1 5.400 0" />
        <circle cx="8" cy="12.200" r="1.200" fill="#fff" stroke="none" />
      </svg>
      <svg viewBox="0 0 16 14" className="ml-[8px] h-[14px] w-4" fill="none" stroke="#fff" strokeWidth="1.100">
        <path d="M.6 4.700v4.600h2.600L7 12.700V1.300L3.200 4.700zM10.500 5l4.500 4.500M15 5l-4.500 4.500" />
      </svg>
      <svg viewBox="0 0 17 14" className="ml-[8px] h-[14px] w-[17px]" fill="none" stroke="#fff" strokeWidth="1.200">
        <path d="M6 3.500h6.500a2 2 0 0 1 2 2v5a2 2 0 0 1-2 2h-9a2 2 0 0 1-2-2V8" />
        <path d="M3.500 10.500V8L7 5.500h5.500v5zM15 6.500h1.500v3H15zM4 .5L1 5h2L2 8l4-4.500H4z" fill="#fff" strokeWidth=".5" />
      </svg>
      <div className="ml-[15px] flex w-[62px] flex-col items-end pb-[2px]">
        <T w={48} className="leading-[16px]">10:31 AM</T>
        <T w={61} className="leading-[16px]">10/29/2022</T>
      </div>
      <svg viewBox="0 0 15 16" className="ml-[8px] mr-[20px] h-4 w-[15px]">
        <path d="M7 1a5 5 0 0 1 5 5v4l1.500 2.500H.5L2 10V6a5 5 0 0 1 5-5zM5 13.500h4a2 2 0 0 1-4 0z" fill="#fff" />
        <path d="M5 5.500h3.500L5 9.500h3.500" stroke="#222" fill="none" strokeWidth="1.200" />
        <path d="M11 1h3l-3 3.500h3" stroke="#fff" fill="none" />
      </svg>
    </div>
  );
}

export default function App() {
  return (
    <div className="relative flex h-[768px] w-[1366px] flex-col overflow-hidden bg-white font-['Roboto','Noto_Sans',sans-serif] text-[#161616]">
      <TabStrip />
      <AddressBar />
      <AppHeader />
      <TitleBar />
      <div className="flex h-[557px] shrink-0">
        <Sidebar />
        <div className="w-[32px] shrink-0" />
        <Editor />
      </div>
      <Taskbar />
      <div className="absolute left-[936px] top-[263px] flex h-[96px] w-[48px] flex-col items-center justify-around bg-white shadow-[0_0_3px_rgba(0,0,0,0.35)]">
        <Icon name="debug" />
        <Fx />
      </div>
      <div className="absolute left-[984px] top-[214px]">
        <Preview />
      </div>
    </div>
  );
}
